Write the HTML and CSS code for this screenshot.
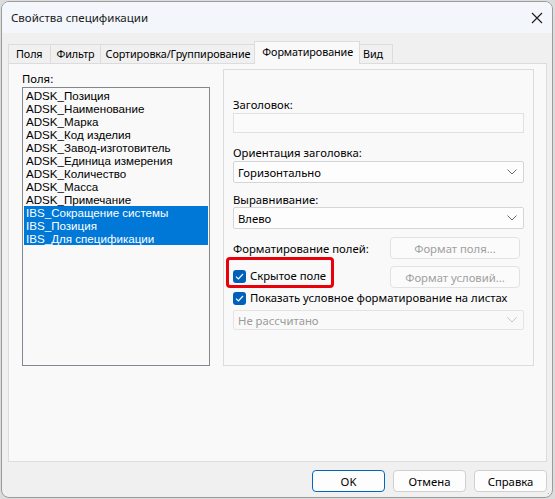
FILE: index.html
```html
<!DOCTYPE html>
<html lang="ru">
<head>
<meta charset="utf-8">
<title>Свойства спецификации</title>
<link rel="stylesheet" href="styles.css">
</head>
<body>
<div class="window">
  <div class="titlebar">
    <span class="title">Свойства спецификации</span>
    <svg class="close" width="12" height="12" viewBox="0 0 12 12"><path d="M1 1L11 11M11 1L1 11" stroke="#1a1a1a" stroke-width="1.1" fill="none"/></svg>
  </div>
  <div class="client">
    <div class="tabs">
      <div class="tab first">Поля</div>
      <div class="tab">Фильтр</div>
      <div class="tab">Сортировка/Группирование</div>
      <div class="tab active">Форматирование</div>
      <div class="tab">Вид</div>
    </div>
    <div class="panel">
      <div class="fields">
        <div class="label">Поля:</div>
        <ul class="listbox">
          <li>ADSK_Позиция</li>
          <li>ADSK_Наименование</li>
          <li>ADSK_Марка</li>
          <li>ADSK_Код изделия</li>
          <li>ADSK_Завод-изготовитель</li>
          <li>ADSK_Единица измерения</li>
          <li>ADSK_Количество</li>
          <li>ADSK_Масса</li>
          <li>ADSK_Примечание</li>
          <li class="sel">IBS_Сокращение системы</li>
          <li class="sel">IBS_Позиция</li>
          <li class="sel">IBS_Для спецификации</li>
        </ul>
      </div>
      <div class="group">
        <div class="label l-head">Заголовок:</div>
        <div class="textbox"></div>
        <div class="label l-orient">Ориентация заголовка:</div>
        <div class="combo"><span>Горизонтально</span><svg class="chev" width="10" height="6" viewBox="0 0 10 6"><path d="M0.5 0.5L5 5L9.5 0.5" stroke="#6b6b6b" stroke-width="1" fill="none"/></svg></div>
        <div class="label l-align">Выравнивание:</div>
        <div class="combo"><span>Влево</span><svg class="chev" width="10" height="6" viewBox="0 0 10 6"><path d="M0.5 0.5L5 5L9.5 0.5" stroke="#6b6b6b" stroke-width="1" fill="none"/></svg></div>
        <div class="row r-fmt">
          <span class="label">Форматирование полей:</span>
          <div class="btn disabled">Формат поля...</div>
        </div>
        <div class="row r-hidden">
          <label class="check highlighted"><span class="box"><svg width="9" height="7" viewBox="0 0 9 7"><path d="M1 3.6L3.4 6L8 1" stroke="#fff" stroke-width="1.2" fill="none"/></svg></span>Скрытое поле</label>
          <div class="btn disabled">Формат условий...</div>
        </div>
        <label class="check c-show"><span class="box"><svg width="9" height="7" viewBox="0 0 9 7"><path d="M1 3.6L3.4 6L8 1" stroke="#fff" stroke-width="1.2" fill="none"/></svg></span>Показать условное форматирование на листах</label>
        <div class="combo disabled"><span>Не рассчитано</span><svg class="chev" width="10" height="6" viewBox="0 0 10 6"><path d="M0.5 0.5L5 5L9.5 0.5" stroke="#c4c4c4" stroke-width="1" fill="none"/></svg></div>
      </div>
    </div>
    <div class="buttons">
      <div class="btn default">OK</div>
      <div class="btn">Отмена</div>
      <div class="btn">Справка</div>
    </div>
    <div class="grip"></div>
  </div>
</div>
</body>
</html>
```

FILE: styles.css
```css
* { box-sizing: border-box; }

html, body {
  margin: 0;
  padding: 0;
  width: 555px;
  height: 499px;
  overflow: hidden;
  background: #dcdcdc;
}

body {
  padding: 1px 2px 0 1px;
  font-family: "Noto Sans", "Liberation Sans", sans-serif;
  font-size: 11.3px;
  color: #000;
}

.window {
  width: 552px;
  height: 497px;
  border: 1px solid #9c9c9c;
  border-radius: 8px;
  overflow: hidden;
  background: #f0f0f0;
  display: flex;
  flex-direction: column;
}

.titlebar {
  height: 31px;
  flex: none;
  background: #f3f6fb;
  display: flex;
  align-items: center;
  padding: 0 0 0 9px;
}

.title {
  flex: 1;
  font-size: 11.5px;
  color: #1a1a1a;
  padding-bottom: 1px;
}

.close { margin-right: 9px; }

.client {
  flex: 1;
  position: relative;
  padding: 8px 5px 0 6px;
  display: flex;
  flex-direction: column;
}

/* tab strip */
.tabs {
  display: flex;
  align-items: flex-end;
  height: 22px;
  position: relative;
  z-index: 1;
}

.tab {
  height: 19px;
  padding: 0 5px 0 6px;
  line-height: 18px;
  font-size: 10.8px;
  letter-spacing: -0.1px;
  border: 1px solid #dcdcdc;
  border-bottom: none;
  border-left: none;
  background: #f0f0f0;
  white-space: nowrap;
}

.tab.first { border-left: 1px solid #dcdcdc; padding-left: 7px; padding-right: 7px; }
.tab:nth-child(3) { padding-left: 5px; padding-right: 4px; }
.tab.active {
  height: 23px;
  margin-bottom: -1px;
  line-height: 20px;
  background: #f9f9f9;
  border-left: 1px solid #dcdcdc;
  margin-left: -1px;
  padding: 0 6px 0 7px;
}
.tab:nth-child(5) { padding: 0 9px 0 3px; }

.panel {
  height: 399px;
  border: 1px solid #dcdcdc;
  background: #f9f9f9;
  display: flex;
  padding: 5px 0 0 13px;
  gap: 13px;
}

.label { line-height: 16px; white-space: nowrap; }

.fields { width: 188px; padding-top: 2px; }

.listbox {
  list-style: none;
  margin: 0;
  height: 279px;
  border: 1px solid #828790;
  background: #f9f9f9;
  padding: 1px 1px 0 1px;
  font-family: "Liberation Sans", sans-serif;
  font-size: 11.6px;
}

.listbox li {
  height: 13px;
  line-height: 13px;
  padding-left: 2px;
  white-space: nowrap;
}

.listbox li.sel { background: #0078d7; color: #fff; }

.group {
  width: 311px;
  height: 297px;
  border: 1px solid #dcdcdc;
  padding: 27px 9px 0 9px;
}

.textbox {
  height: 20px;
  border: 1px solid #e1e1e1;
  background: #fbfbfb;
}

.l-orient { margin-top: 12px; }
.l-align { margin-top: 9px; margin-bottom: -1px; }

.combo {
  height: 22px;
  border: 1px solid #d5d5d5;
  border-radius: 2px;
  background: #fdfdfd;
  display: flex;
  align-items: center;
  justify-content: space-between;
  padding: 0 6px 0 4px;
}

.combo.disabled {
  height: 20px;
  border-color: #e4e4e4;
  background: #f9f9f9;
  color: #9a9a9a;
  margin-top: 4px;
}

.row {
  display: flex;
  align-items: center;
  justify-content: space-between;
  padding-right: 4px;
}

.r-fmt { margin-top: 8px; }
.r-hidden { margin-top: 5px; }
.r-fmt .label { padding-top: 2px; }

.btn {
  width: 73px;
  height: 22px;
  border: 1px solid #d0d0d0;
  border-radius: 4px;
  background: #fdfdfd;
  display: flex;
  align-items: center;
  justify-content: center;
}

.btn.disabled {
  width: 130px;
  color: #a0a0a0;
  border-color: #e2e2e2;
  background: #fbfbfb;
}

.r-hidden .btn { margin-top: 2px; }

.check {
  display: flex;
  align-items: center;
  gap: 4px;
  line-height: 16px;
  white-space: nowrap;
}

.c-show { margin-top: 2px; }

.box {
  width: 13px;
  height: 13px;
  border-radius: 3px;
  background: #005fb8;
  display: flex;
  align-items: center;
  justify-content: center;
}

/* red highlight frame around the hidden-field checkbox */
.highlighted { position: relative; }
.highlighted::before {
  content: "";
  position: absolute;
  left: -7px;
  top: -11px;
  width: 102px;
  height: 25px;
  border: 3px solid #e8000b;
  border-radius: 4px;
}

.buttons {
  display: flex;
  justify-content: flex-end;
  gap: 8px;
  margin-top: 8px;
}

.btn.default { border-color: #0067c0; }

.grip {
  position: absolute;
  right: 1px;
  bottom: 1px;
  width: 7px;
  height: 7px;
  background-image: radial-gradient(circle, #a8a8a8 0.8px, transparent 1px);
  background-size: 3px 3px;
  clip-path: polygon(100% 0, 100% 100%, 0 100%);
}
```
